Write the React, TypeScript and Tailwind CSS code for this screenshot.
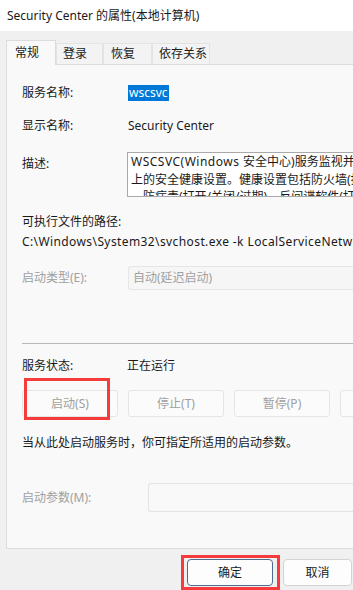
import React from 'react';

const font = {
  fontFamily: '"Noto Sans", "Noto Sans CJK SC", sans-serif',
};

function Tab({ label, active, w, pl }: { label: string; active?: boolean; w: string; pl: string }) {
  return (
    <div
      className={`flex items-center border border-b-0 text-[12px] ${w} ${pl} ${
        active
          ? 'relative z-10 -mb-px h-[25px] border-[#dcdcdc] bg-[#f9f9f9] text-[#1a1a1a]'
          : 'h-[21px] border-[#e3e3e3] bg-[#f3f3f3] text-[#1a1a1a]'
      }`}
    >
      {label}
    </div>
  );
}

function ActionButton({ label }: { label: string }) {
  return (
    <div className="flex h-[27px] w-[96px] shrink-0 items-center justify-center rounded-[3px] border border-[#e5e5e5] bg-[#fbfbfb] text-[12px] text-[#a0a0a0]">
      {label}
    </div>
  );
}

export default function App() {
  return (
    <div
      className="relative h-[590px] w-[353px] overflow-hidden bg-[#f0f0f0] text-[12px] text-[#1a1a1a]"
      style={font}
    >
      {/* title bar */}
      <div className="flex h-[31px] items-center bg-white pl-[7px]">
        Security Center 的属性(本地计算机)
      </div>

      {/* tabs */}
      <div className="flex items-end pl-[6px] pt-[9px]">
        <Tab label="常规" active w="w-[50px]" pl="pl-[8px]" />
        <Tab label="登录" w="w-[47px]" pl="pl-[6px]" />
        <Tab label="恢复" w="w-[49px]" pl="pl-[7px]" />
        <Tab label="依存关系" w="w-[58px]" pl="pl-[6px]" />
      </div>

      {/* panel */}
      <div className="ml-[6px] flex h-[485px] w-[420px] flex-col border border-[#dcdcdc] bg-[#f9f9f9] pl-[15px]">
        <div className="mt-[20px] flex h-[16px] items-center">
          <span className="w-[106px]">服务名称:</span>
          <span className="bg-[#0078d7] px-px leading-[16px] text-white">wscsvc</span>
        </div>

        <div className="mt-[17px] flex h-[16px] items-center">
          <span className="w-[106px]">显示名称:</span>
          <span>Security Center</span>
        </div>

        <div className="mt-[18px] flex h-[45px]">
          <span className="mt-[4px] w-[105px] leading-[16px]">描述:</span>
          <div className="flex-1 overflow-hidden border border-r-0 border-[#a9a9a9] bg-white pl-[3px] leading-[17.5px] whitespace-nowrap">
            <div>
              <span className="tracking-[0.5px]">WSCSVC(Windows </span>安全中心)服务监视并报告计算机
            </div>
            <div>上的安全健康设置。健康设置包括防火墙(打开/关闭)</div>
            <div>、防病毒(打开/关闭/过期)、反间谍软件(打开/关闭/过期)</div>
          </div>
        </div>

        <div className="mt-[17px] flex h-[16px] items-center">可执行文件的路径:</div>
        <div className="mt-[4px] flex h-[16px] items-center whitespace-nowrap tracking-[0.4px]">
          C:\Windows\System32\svchost.exe -k LocalServiceNetworkRestricted -p
        </div>

        <div className="mt-[16px] flex h-[24px] items-center">
          <span className="w-[106px] text-[#a0a0a0]">启动类型(E):</span>
          <div className="flex h-[24px] flex-1 items-center rounded-l-[3px] border border-r-0 border-[#e6e6e6] bg-[#f6f6f6] pl-[4px] text-[#a0a0a0]">
            自动(延迟启动)
          </div>
        </div>

        <div className="mt-[53px] h-px bg-[#b9b9b9]" />

        <div className="mt-[14px] flex h-[16px] items-center">
          <span className="w-[105px]">服务状态:</span>
          <span>正在运行</span>
        </div>

        <div className="mt-[16px] flex gap-[10px]">
          <ActionButton label="启动(S)" />
          <ActionButton label="停止(T)" />
          <ActionButton label="暂停(P)" />
          <ActionButton label="恢复(R)" />
        </div>

        <div className="mt-[18px] flex h-[16px] items-center">
          当从此处启动服务时，你可指定所适用的启动参数。
        </div>

        <div className="mt-[32px] flex h-[29px] items-center">
          <span className="w-[126px] text-[#a0a0a0]">启动参数(M):</span>
          <div className="h-[29px] flex-1 rounded-l-[3px] border border-r-0 border-[#e3e3e3] bg-[#f9f9f9]" />
        </div>
      </div>

      {/* footer buttons */}
      <div className="mt-[10px] flex gap-[10px] pl-[187px]">
        <div className="flex h-[27px] w-[86px] shrink-0 items-center justify-center rounded-[4px] border border-[#4d6d8c] bg-[#fdfdfd]">
          确定
        </div>
        <div className="flex h-[27px] w-[69px] shrink-0 items-center justify-center rounded-[4px] border border-[#d3d3d3] bg-[#fdfdfd]">
          取消
        </div>
        <div className="h-[27px] w-[80px] shrink-0 rounded-[4px] border border-[#d3d3d3] bg-[#fdfdfd]" />
      </div>

      {/* red annotation frames */}
      <div className="absolute left-[24px] top-[378px] h-[42px] w-[86px] border-[3px] border-[#f53b3b]" />
      <div className="absolute left-[181px] top-[555px] h-[35px] w-[99px] border-[3px] border-[#f53b3b]" />
    </div>
  );
}
